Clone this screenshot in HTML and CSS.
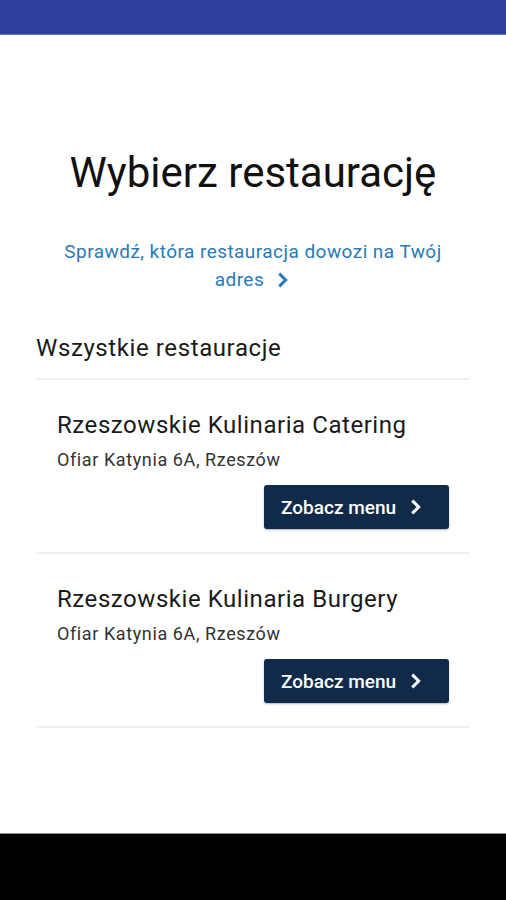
FILE: index.html
```html
<!DOCTYPE html>
<html lang="pl">
<head>
    <meta charset="UTF-8">
    <meta name="viewport" content="width=device-width, initial-scale=1.0">
    <title>Wybierz restaurację</title>
    <link rel="stylesheet" href="styles.css">
</head>
<body>

    <!-- Status bar -->
    <div class="status-bar"></div>

    <div class="page">
        <h1 class="page-title">Wybierz restaurację</h1>

        <a href="#" class="check-link">
            Sprawdź, która restauracja dowozi na Twój adres
            <svg class="chevron" viewBox="0 0 24 24" width="16" height="16"><path d="M8 4l8 8-8 8" /></svg>
        </a>

        <h2 class="section-title">Wszystkie restauracje</h2>

        <!-- Restaurant list -->
        <div class="restaurant-list">
            <div class="restaurant">
                <h3>Rzeszowskie Kulinaria Catering</h3>
                <p>Ofiar Katynia 6A, Rzeszów</p>
                <div class="actions">
                    <button class="menu-btn">Zobacz menu
                        <svg class="chevron" viewBox="0 0 24 24" width="16" height="16"><path d="M8 4l8 8-8 8" /></svg>
                    </button>
                </div>
            </div>
            <div class="restaurant">
                <h3>Rzeszowskie Kulinaria Burgery</h3>
                <p>Ofiar Katynia 6A, Rzeszów</p>
                <div class="actions">
                    <button class="menu-btn">Zobacz menu
                        <svg class="chevron" viewBox="0 0 24 24" width="16" height="16"><path d="M8 4l8 8-8 8" /></svg>
                    </button>
                </div>
            </div>
        </div>
    </div>

    <!-- Android navigation bar -->
    <div class="nav-bar"></div>

</body>
</html>
```

FILE: styles.css
```css
/* Reset */
* {
    margin: 0;
    padding: 0;
    box-sizing: border-box;
}

body {
    font-family: Roboto, "Liberation Sans", Arial, sans-serif;
    color: #1a1a1a;
    background: #fff;
    min-height: 100vh;
    display: flex;
    flex-direction: column;
}

/* Top status bar */
.status-bar {
    height: 35px;
    background-color: #2e3f9c;
    border-bottom: 1px solid #6d7ab8;
}

.page {
    flex: 1;
    padding: 0 36px;
}

.page-title {
    font-size: 42px;
    font-weight: 400;
    line-height: 48px;
    text-align: center;
    margin-top: 114px;
    color: #111;
}

/* Link under the title */
.check-link {
    display: block;
    text-align: center;
    color: #2a79b6;
    text-decoration: none;
    font-size: 19px;
    letter-spacing: 0.45px;
    line-height: 28px;
    margin: 41px 20px 0;
}

.check-link .chevron {
    margin-left: 6px;
    vertical-align: -2px;
}

.chevron path {
    fill: none;
    stroke: currentColor;
    stroke-width: 4.5;
    stroke-linecap: square;
}

.section-title {
    font-size: 24px;
    font-weight: 400;
    letter-spacing: 0.6px;
    line-height: 30px;
    margin-top: 39px;
    padding-bottom: 15px;
    border-bottom: 2px solid #f0f0f0;
    color: #1a1a1a;
}

/* Restaurant cards */
.restaurant {
    padding: 30px 21px 23px;
    border-bottom: 2px solid #f0f0f0;
}

.restaurant h3 {
    font-size: 24px;
    font-weight: 400;
    letter-spacing: 0.55px;
    line-height: 30px;
    color: #1a1a1a;
}

.restaurant p {
    font-size: 18px;
    letter-spacing: 0.6px;
    line-height: 24px;
    margin-top: 8px;
    color: #333;
}

.actions {
    display: flex;
    justify-content: flex-end;
    margin-top: 13px;
}

.menu-btn {
    display: flex;
    align-items: center;
    gap: 12px;
    width: 185px;
    height: 44px;
    padding: 0 17px;
    background-color: #122a4a;
    color: #fff;
    border: none;
    border-radius: 3px;
    font-family: inherit;
    font-size: 19px;
    font-weight: 500;
    box-shadow: 0 1px 2px rgba(0, 0, 0, 0.3);
    cursor: pointer;
}

/* Bottom navigation bar */
.nav-bar {
    height: 67px;
    background: #000;
    border-top: 1px solid #888;
}
```
